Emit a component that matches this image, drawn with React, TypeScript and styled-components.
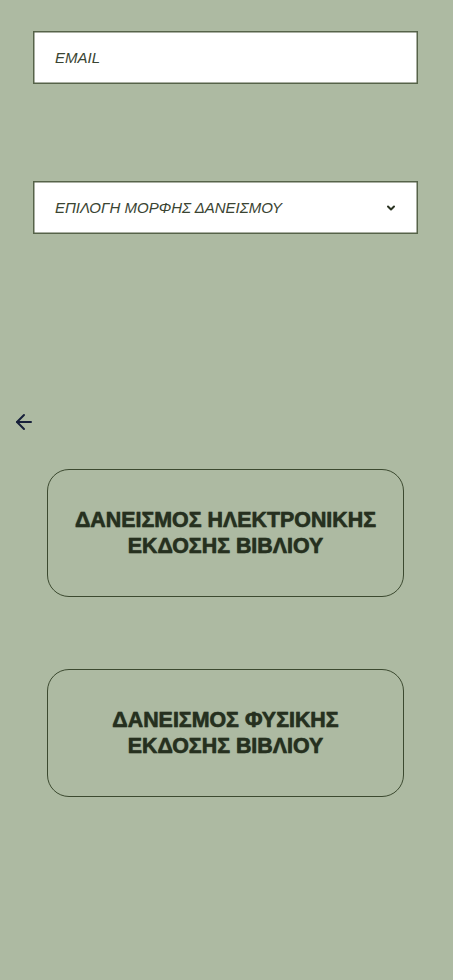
import styled, { createGlobalStyle } from 'styled-components';

const GlobalStyle = createGlobalStyle`
    html, body {
        margin: 0;
        padding: 0;
        background: #adbaa2;
        font-family: "Liberation Sans", Arial, sans-serif;
    }
`;

const Page = styled.div`
    display: flex;
    flex-direction: column;
    min-height: 980px;
    padding: 31px 35px 0 33px;
    box-sizing: border-box;
`;

const Field = styled.div`
    display: flex;
    align-items: center;
    justify-content: space-between;
    height: 53px;
    box-sizing: border-box;
    padding: 0 20px 0 21px;
    background: #ffffff;
    border: 1px solid #566349;
    box-shadow: inset 0 0 0 0.5px #566349;
    font-size: 15px;
    font-style: italic;
    color: #3a4432;
    margin-bottom: ${(p: { $gap: number }) => p.$gap}px;
`;

const Chevron = styled.svg`
    width: 12px;
    height: 12px;
    color: #2a3322;
`;

const BackButton = styled.button`
    display: flex;
    align-items: center;
    background: none;
    border: 0;
    padding: 0;
    margin: 0 0 35px -21px;
    width: 24px;
    height: 24px;
    color: #17203a;
    cursor: pointer;
`;

const Choices = styled.div`
    display: flex;
    flex-direction: column;
    gap: 72px;
    padding-left: 14px;
    padding-right: 14px;
`;

const Choice = styled.button`
    height: 128px;
    width: 100%;
    box-sizing: border-box;
    background: transparent;
    border: 1px solid #3c4a30;
    border-radius: 22px;
    font-family: "Liberation Sans", Arial, sans-serif;
    font-weight: 700;
    font-size: 21.4px;
    line-height: 26px;
    color: #26301f;
    -webkit-text-stroke: 0.4px #26301f;
    text-shadow: 0 0 1px rgba(30, 40, 25, 0.7);
    cursor: pointer;
`;

export default function App() {
    return (
        <>
            <GlobalStyle />
            <Page>
                <Field $gap={97}>EMAIL</Field>
                <Field $gap={176}>
                    ΕΠΙΛΟΓΗ ΜΟΡΦΗΣ ΔΑΝΕΙΣΜΟΥ
                    <Chevron viewBox="0 0 24 24" fill="none" stroke="currentColor" strokeWidth="4" strokeLinecap="round" strokeLinejoin="round">
                        <path d="M6 9l6 6 6-6" />
                    </Chevron>
                </Field>
                <BackButton aria-label="back">
                    <svg width="24" height="24" viewBox="0 0 24 24" fill="none" stroke="currentColor" strokeWidth="2" strokeLinecap="round" strokeLinejoin="round">
                        <path d="M19 12H5" />
                        <path d="M12 19l-7-7 7-7" />
                    </svg>
                </BackButton>
                <Choices>
                    <Choice>
                        ΔΑΝΕΙΣΜΟΣ ΗΛΕΚΤΡΟΝΙΚΗΣ
                        <br />
                        ΕΚΔΟΣΗΣ ΒΙΒΛΙΟΥ
                    </Choice>
                    <Choice>
                        ΔΑΝΕΙΣΜΟΣ ΦΥΣΙΚΗΣ
                        <br />
                        ΕΚΔΟΣΗΣ ΒΙΒΛΙΟΥ
                    </Choice>
                </Choices>
            </Page>
        </>
    );
}
